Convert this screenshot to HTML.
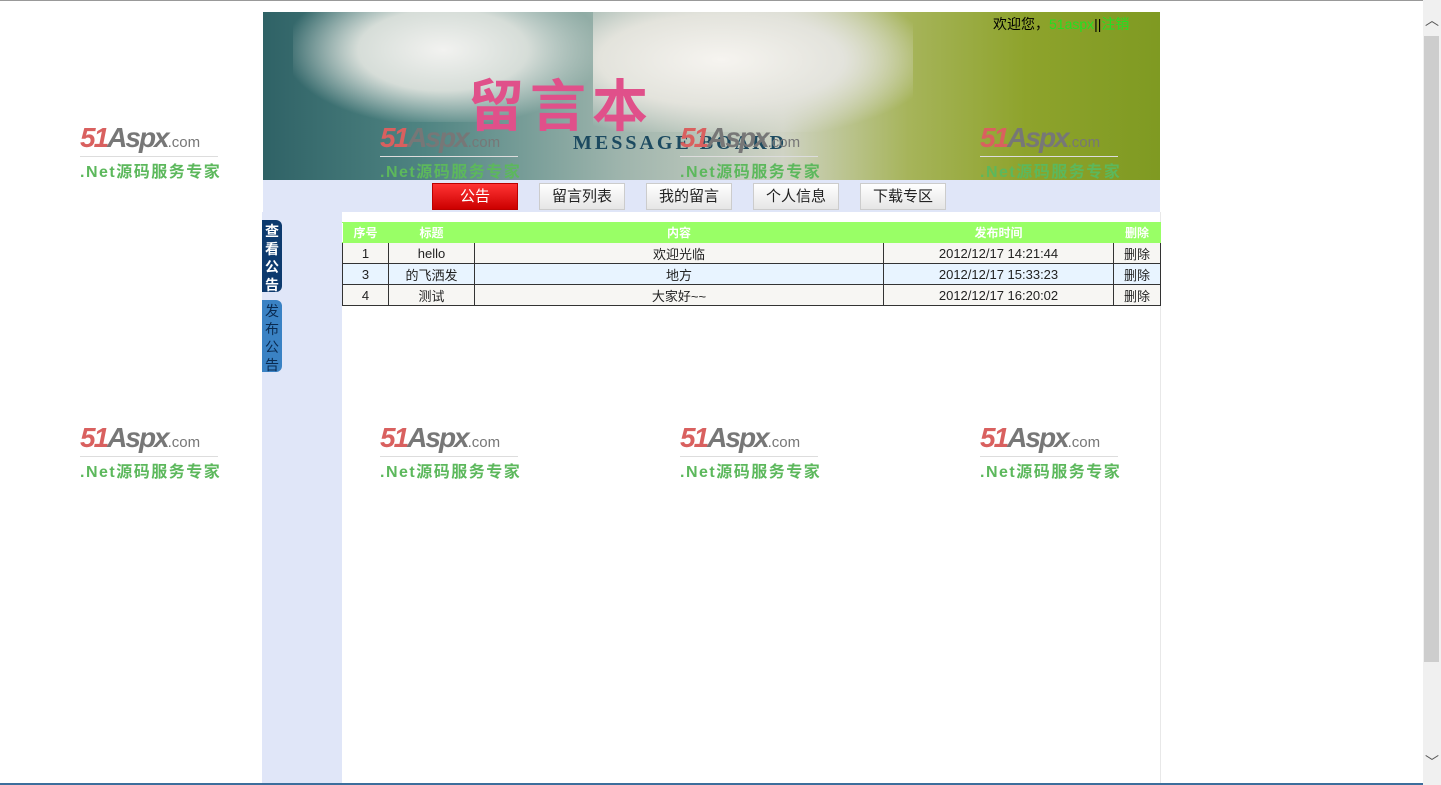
<!DOCTYPE html>
<html><head><meta charset="utf-8"><style>
*{margin:0;padding:0;box-sizing:border-box}
body{width:1441px;height:785px;overflow:hidden;background:#fff;position:relative;font-family:"Liberation Sans","Noto Sans CJK SC",sans-serif;font-size:12px;color:#000}
.abs{position:absolute}
.banner{left:263px;top:12px;width:897px;height:168px;background:linear-gradient(90deg,#2f6266 0%,#4f8482 18%,#9fb5ad 40%,#cfd3c4 58%,#a6b45a 72%,#8ea32c 85%,#7f9a22 100%);overflow:hidden}
.wm{position:absolute;width:140px;height:56px}
.wm .a{font:italic bold 28px "Liberation Sans",sans-serif;color:#d9605f;letter-spacing:-2px;position:absolute;left:0;top:0;white-space:nowrap}
.wm .a b{color:#777}
.wm .a i{font-size:15px;font-style:normal;font-weight:normal;color:#777;letter-spacing:0}
.wm .n{position:absolute;left:0;top:34px;width:138px;font-size:16px;color:#5cb85c;font-weight:bold;letter-spacing:1.5px;white-space:nowrap;border-top:1px solid #ddd;padding-top:1px}
.nav{left:263px;top:180px;width:897px;height:32px;background:#e0e6f8}
.btn{position:absolute;top:3px;width:86px;height:27px;border:1px solid #ccc;background:linear-gradient(#fff,#e6e6e6);text-align:center;line-height:25px;font-size:15px;color:#222}
.btn.on{background:linear-gradient(#f33,#c00);color:#fff;border-color:#b00}
.left{left:262px;top:212px;width:80px;height:573px;background:#e0e6f8}
.side{position:absolute;left:262px;width:20px;border-radius:0 6px 6px 0;color:#fff;font-size:14px;line-height:18px;text-align:center;padding-top:2px}
table{position:absolute;left:342px;top:222px;width:819px;border-collapse:collapse;font-size:13px}
td,th{border:1px solid #333;text-align:center;height:21px;color:#222}
th{background:#99ff66;color:#fff;border-color:#99ff66;height:20px;font-weight:bold;border-left:1px solid #fff;font-size:12px}
tr.r2 td{background:#e8f4ff}
tr.r1 td{background:#f7f6f3}
</style></head><body>
<div class="abs" style="left:0;top:0;width:1441px;height:1px;background:#999"></div>
<div class="abs banner">
 <div class="abs" style="left:30px;top:-10px;width:300px;height:120px;background:radial-gradient(ellipse at 50% 40%,#f2f2f0 0%,#d6ddd8 40%,transparent 75%)"></div>
 <div class="abs" style="left:330px;top:0;width:320px;height:120px;background:radial-gradient(ellipse at 40% 40%,#f6f4f0 0%,#e3e3dc 45%,transparent 80%)"></div>
 <div class="abs" style="left:205px;top:50px;font:bold 56px 'Noto Sans CJK SC',sans-serif;color:#e0508a;letter-spacing:6px">留言本</div>
 <div class="abs" style="left:310px;top:120px;font:bold 20px 'Liberation Serif',serif;color:#1c4a60;letter-spacing:3px">MESSAGE BOARD</div>
 <div class="abs" style="left:730px;top:2px;font-size:14px">欢迎您，<span style="color:#22e022">51aspx</span>||<span style="color:#22e022">注销</span></div>
</div>
<div class="wm" style="left:80px;top:122px"><div class="a">51<b>Aspx</b><i>.com</i></div><div class="n">.Net源码服务专家</div></div>
<div class="wm" style="left:380px;top:122px"><div class="a">51<b>Aspx</b><i>.com</i></div><div class="n">.Net源码服务专家</div></div>
<div class="wm" style="left:680px;top:122px"><div class="a">51<b>Aspx</b><i>.com</i></div><div class="n">.Net源码服务专家</div></div>
<div class="wm" style="left:980px;top:122px"><div class="a">51<b>Aspx</b><i>.com</i></div><div class="n">.Net源码服务专家</div></div>
<div class="abs nav">
 <div class="btn on" style="left:169px">公告</div>
 <div class="btn" style="left:276px">留言列表</div>
 <div class="btn" style="left:383px">我的留言</div>
 <div class="btn" style="left:490px">个人信息</div>
 <div class="btn" style="left:597px">下载专区</div>
</div>
<div class="abs left"></div>
<div class="abs" style="left:342px;top:212px;width:819px;height:573px;border-right:1px solid #e8e8e8"></div>
<div class="side" style="top:220px;height:72px;background:#0d3a6e;font-weight:bold">查<br>看<br>公<br>告</div>
<div class="side" style="top:300px;height:72px;background:#3a82c4;color:#0a2a50">发<br>布<br>公<br>告</div>
<table>
<tr><th style="width:46px">序号</th><th style="width:86px">标题</th><th style="width:409px">内容</th><th style="width:230px">发布时间</th><th>删除</th></tr>
<tr class="r1"><td>1</td><td>hello</td><td>欢迎光临</td><td>2012/12/17 14:21:44</td><td>删除</td></tr>
<tr class="r2"><td>3</td><td>的飞洒发</td><td>地方</td><td>2012/12/17 15:33:23</td><td>删除</td></tr>
<tr class="r1"><td>4</td><td>测试</td><td>大家好~~</td><td>2012/12/17 16:20:02</td><td>删除</td></tr>
</table>
<div class="wm" style="left:80px;top:422px"><div class="a">51<b>Aspx</b><i>.com</i></div><div class="n">.Net源码服务专家</div></div>
<div class="wm" style="left:380px;top:422px"><div class="a">51<b>Aspx</b><i>.com</i></div><div class="n">.Net源码服务专家</div></div>
<div class="wm" style="left:680px;top:422px"><div class="a">51<b>Aspx</b><i>.com</i></div><div class="n">.Net源码服务专家</div></div>
<div class="wm" style="left:980px;top:422px"><div class="a">51<b>Aspx</b><i>.com</i></div><div class="n">.Net源码服务专家</div></div>
<div class="abs" style="left:1423px;top:0;width:18px;height:785px;background:#f0f0f0"></div>
<div class="abs" style="left:1424px;top:36px;width:15px;height:626px;background:#cdcdcd"></div>
<div class="abs" style="left:1425px;top:10px;font-size:14px;color:#555">︿</div>
<div class="abs" style="left:1425px;top:752px;font-size:14px;color:#555">﹀</div>
<div class="abs" style="left:0;top:783px;width:1423px;height:2px;background:#3c6e9c"></div>
</body></html>
